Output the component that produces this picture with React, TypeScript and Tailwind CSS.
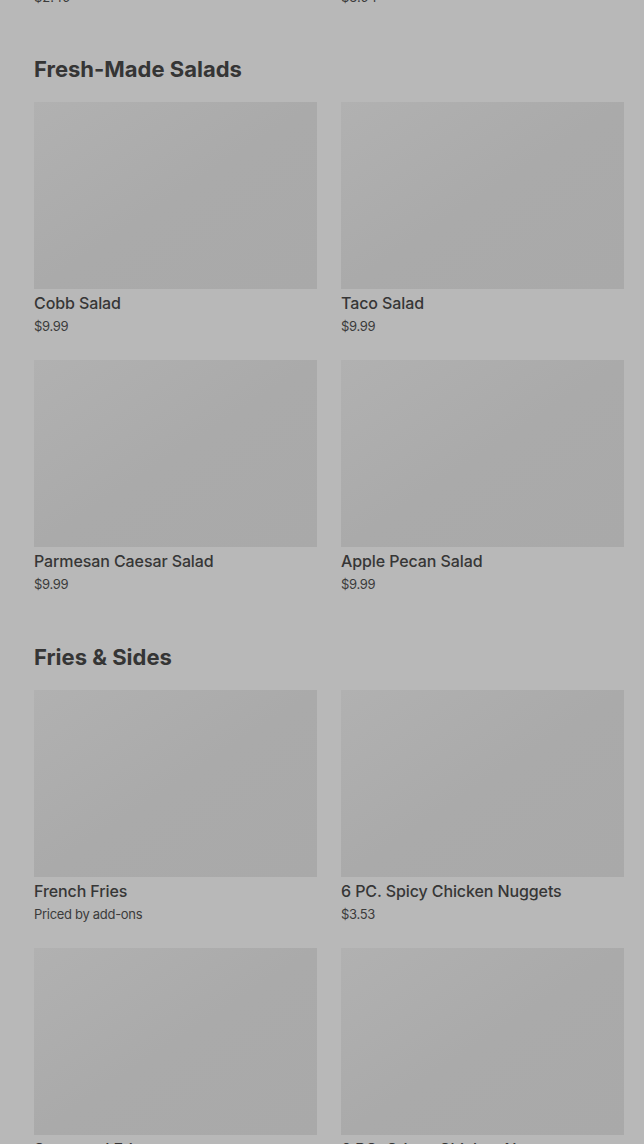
import React from 'react';

type Item = {
  name: string;
  price: string;
  id: number;
};
type Section = {
  title: string;
  items: Array<Item>;
};

const sections: Array<Section> = [
  {
    title: 'Fresh-Made Salads',
    items: [
      { name: 'Cobb Salad', price: '$9.99', id: 0 },
      { name: 'Taco Salad', price: '$9.99', id: 1 },
      { name: 'Parmesan Caesar Salad', price: '$9.99', id: 2 },
      { name: 'Apple Pecan Salad', price: '$9.99', id: 3 },
    ],
  },
  {
    title: 'Fries & Sides',
    items: [
      { name: 'French Fries', price: 'Priced by add-ons', id: 0 },
      { name: '6 PC. Spicy Chicken Nuggets', price: '$3.53', id: 1 },
      { name: 'Seasoned Fries', price: '$2.49', id: 2 },
      { name: '6 PC. Crispy Chicken Nuggets', price: '$3.53', id: 3 },
    ],
  },
];

const Card = ({ name, price }: Item) => (
  <div className="flex flex-col">
    <div className="h-[187px] w-full bg-gradient-to-br from-[#b1b1b1] via-[#aaaaaa] to-[#a9a9a9]" />
    <p className="mt-1 text-[16px] leading-5 font-medium text-[#363636] tracking-[-0.1px]">
      {name}
    </p>
    <p className="mt-1 text-[13px] leading-[18px] text-[#3b3b3b] tracking-[-0.3px]">
      {price}
    </p>
  </div>
);

const App = () => {
  return (
    <div
      className="h-[1144px] overflow-hidden bg-[#b8b8b8] pl-[34px] pr-5"
      style={{ fontFamily: 'Inter, "Liberation Sans", sans-serif' }}
    >
      <div className="-mt-[12px] grid grid-cols-2 gap-x-6 text-[13px] leading-[18px] text-[#3b3b3b]">
        <p>$2.49</p>
        <p>$3.94</p>
      </div>
      {sections.map(({ title, items }, i) => (
        <section key={title} className={i === 0 ? 'mt-[49px]' : 'mt-[50px]'}>
          <h2 className="text-[22px] leading-7 font-bold tracking-[0px] text-[#353535] mb-[19px]">
            {title}
          </h2>
          <div className="grid grid-cols-2 gap-x-6 gap-y-[25px]">
            {items.map((item) => (
              <Card key={item.id} {...item} />
            ))}
          </div>
        </section>
      ))}
    </div>
  );
};

export default App;
